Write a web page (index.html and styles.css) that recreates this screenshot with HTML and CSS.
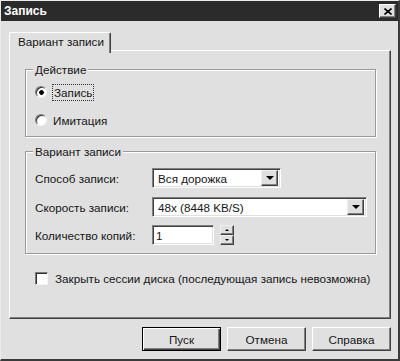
FILE: index.html
```html
<!DOCTYPE html>
<html lang="ru">
<head>
<meta charset="utf-8">
<title>Запись</title>
<link rel="stylesheet" href="styles.css">
</head>
<body>
<div class="win">
  <div class="titlebar">
    <span class="title">Запись</span>
    <span class="close"><svg width="8" height="7" viewBox="0 0 8 7"><path d="M0.5 0.5 L7.5 6.5 M7.5 0.5 L0.5 6.5" stroke="#000" stroke-width="1.6" fill="none"/></svg></span>
  </div>
  <div class="body">
    <div class="tab">Вариант записи</div>
    <div class="panel">
      <fieldset class="group g1">
        <legend>Действие</legend>
        <div class="radio"><span class="rb checked"></span><span class="focus">Запись</span></div>
        <div class="radio"><span class="rb"></span><span class="rtext">Имитация</span></div>
      </fieldset>
      <fieldset class="group g2">
        <legend>Вариант записи</legend>
        <div class="row r1"><span class="lbl">Способ записи:</span>
          <div class="combo c1"><span class="val">Вся дорожка</span><span class="dd"><span class="tri"></span></span></div>
        </div>
        <div class="row r2"><span class="lbl">Скорость записи:</span>
          <div class="combo c2"><span class="val">48x (8448 KB/S)</span><span class="dd"><span class="tri"></span></span></div>
        </div>
        <div class="row r3"><span class="lbl">Количество копий:</span>
          <div class="edit"><span class="val">1</span></div>
          <div class="spin"><span class="sb"><span class="up"></span></span><span class="sb"><span class="down"></span></span></div>
        </div>
      </fieldset>
      <div class="check"><span class="cb"></span><span class="ctext">Закрыть сессии диска (последующая запись невозможна)</span></div>
    </div>
    <div class="buttons">
      <div class="btn default">Пуск</div>
      <div class="btn">Отмена</div>
      <div class="btn">Справка</div>
    </div>
  </div>
</div>
</body>
</html>
```
FILE: styles.css
```css
html, body {
  margin: 0;
  padding: 0;
  background: #e0e0e0;
}
.win {
  width: 400px;
  height: 361px;
  box-sizing: border-box;
  background: #e0e0e0;
  border-top: 1px solid #ececec;
  border-left: 1px solid #ececec;
  border-right: 2px solid #3a3a3a;
  border-bottom: 2px solid #3a3a3a;
  display: flex;
  flex-direction: column;
  font-family: "Liberation Sans", Arial, sans-serif;
  font-size: 11.7px;
  color: #161616;
}
.titlebar {
  height: 20px;
  flex: none;
  background: #2b2b2b;
  display: flex;
  align-items: center;
  justify-content: space-between;
  padding: 0 2px 0 3px;
}
.title {
  color: #fff;
  font-weight: bold;
  font-size: 12px;
}
.close {
  width: 17px;
  height: 14px;
  box-sizing: border-box;
  background: #e0e0e0;
  border: 1px solid;
  border-color: #fff #404040 #404040 #fff;
  box-shadow: inset -1px -1px 0 #808080;
  display: flex;
  align-items: center;
  justify-content: center;
}
.body {
  flex: 1;
  display: flex;
  flex-direction: column;
  padding: 11px 7px 0 8px;
}
.tab {
  align-self: flex-start;
  width: 102px;
  height: 21px;
  box-sizing: border-box;
  margin-bottom: -3px;
  padding: 0 0 3px 8px;
  display: flex;
  align-items: center;
  background: #e0e0e0;
  border-top: 1px solid #fff;
  border-left: 1px solid #fff;
  border-right: 1px solid #404040;
  border-radius: 2px 2px 0 0;
  box-shadow: inset -1px 0 0 #808080;
  position: relative;
  z-index: 1;
}
.panel {
  height: 269px;
  box-sizing: border-box;
  border-top: 1px solid #fff;
  border-left: 1px solid #fff;
  border-right: 1px solid #404040;
  border-bottom: 1px solid #404040;
  box-shadow: inset -1px -1px 0 #808080;
  padding: 10px 14px 0 15px;
  display: flex;
  flex-direction: column;
}
.group {
  margin: 0;
  min-width: 0;
  border: 1px solid #9a9a9a;
  box-shadow: inset 1px 1px 0 #fff, 1px 1px 0 #fff;
  padding: 7px 8px 6px 9px;
}
.group legend {
  padding: 2px 2px 0;
  margin-left: -2px;
  line-height: 14px;
  background: #e0e0e0;
}
.g2 {
  margin-top: 6px;
  padding: 9px 8px 8px 9px;
}
.g1 {
  padding-top: 5px;
}
.radio {
  display: flex;
  align-items: center;
  height: 20px;
}
.radio + .radio {
  margin-top: 8px;
}
.rb {
  width: 12px;
  height: 12px;
  box-sizing: border-box;
  border-radius: 50%;
  background: #fff;
  border: 1px solid;
  border-color: #7a7a7a #f4f4f4 #f4f4f4 #7a7a7a;
  box-shadow: inset 1px 1px 0 #303030;
  margin-right: 5px;
}
.rb.checked {
  background: radial-gradient(circle at 55% 55%, #000 0, #000 2px, #fff 2.6px);
}
.focus {
  border: 1px dotted #333;
  padding: 0 1px;
  line-height: 15px;
}
.rtext {
  padding-left: 1px;
}
.row {
  display: flex;
  align-items: center;
  height: 20px;
}
.r2 { margin-top: 9px; }
.r3 { margin-top: 8px; }
.lbl {
  width: 117px;
  flex: none;
}
.combo, .edit {
  height: 20px;
  box-sizing: border-box;
  border: 1px solid;
  border-color: #808080 #fff #fff #808080;
  box-shadow: inset 1px 1px 0 #404040, inset -1px -1px 0 #e0e0e0;
  background: #fff;
  display: flex;
  align-items: center;
  padding: 2px;
}
.c1 { width: 129px; }
.c2 { width: 216px; }
.edit { width: 62px; }
.val {
  flex: 1;
  padding-left: 3px;
  white-space: nowrap;
}
.edit .val {
  padding-left: 1px;
}
.dd {
  width: 17px;
  height: 16px;
  box-sizing: border-box;
  background: #e0e0e0;
  border: 1px solid;
  border-color: #f0f0f0 #404040 #404040 #f0f0f0;
  box-shadow: inset -1px -1px 0 #808080;
  display: flex;
  align-items: center;
  justify-content: center;
}
.tri {
  width: 0;
  height: 0;
  border-left: 4px solid transparent;
  border-right: 4px solid transparent;
  border-top: 4px solid #000;
}
.spin {
  margin-left: 6px;
  display: flex;
  flex-direction: column;
}
.sb {
  width: 14px;
  height: 10px;
  box-sizing: border-box;
  background: #e0e0e0;
  border: 1px solid;
  border-color: #f0f0f0 #404040 #404040 #f0f0f0;
  box-shadow: inset -1px -1px 0 #808080;
  display: flex;
  align-items: center;
  justify-content: center;
}
.up {
  width: 0;
  height: 0;
  border-left: 2px solid transparent;
  border-right: 2px solid transparent;
  border-bottom: 2px solid #000;
}
.down {
  width: 0;
  height: 0;
  border-left: 2px solid transparent;
  border-right: 2px solid transparent;
  border-top: 2px solid #000;
}
.check {
  display: flex;
  align-items: center;
  margin-top: 18px;
  margin-left: 10px;
  height: 13px;
}
.ctext {
  white-space: nowrap;
}
.cb {
  width: 13px;
  height: 13px;
  box-sizing: border-box;
  background: #fff;
  border: 1px solid;
  border-color: #7a7a7a #f4f4f4 #f4f4f4 #7a7a7a;
  box-shadow: inset 1px 1px 0 #303030;
  margin-right: 7px;
  flex: none;
}
.buttons {
  display: flex;
  justify-content: flex-end;
  gap: 6px;
  margin-top: 8px;
}
.btn {
  width: 79px;
  height: 24px;
  box-sizing: border-box;
  background: #e0e0e0;
  border: 1px solid;
  border-color: #fff #404040 #404040 #fff;
  box-shadow: inset -1px -1px 0 #808080;
  display: flex;
  align-items: center;
  justify-content: center;
}
.btn.default {
  border-color: #000;
  box-shadow: inset 1px 1px 0 #fff, inset -1px -1px 0 #404040, inset -2px -2px 0 #808080;
}
```
